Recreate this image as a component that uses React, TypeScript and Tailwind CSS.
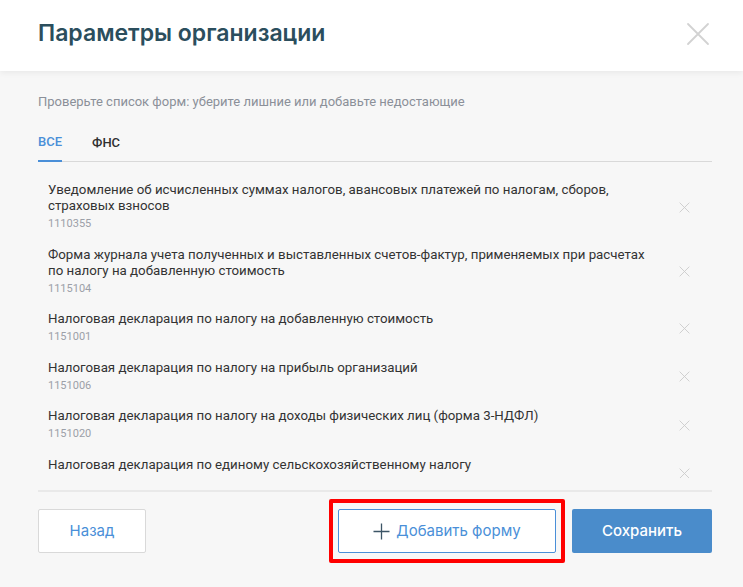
import React from "react";

type FormItem = { title: string; code: string };

const forms: FormItem[] = [
  {
    title:
      "Уведомление об исчисленных суммах налогов, авансовых платежей по налогам, сборов, страховых взносов",
    code: "1110355",
  },
  {
    title:
      "Форма журнала учета полученных и выставленных счетов-фактур, применяемых при расчетах по налогу на добавленную стоимость",
    code: "1115104",
  },
  { title: "Налоговая декларация по налогу на добавленную стоимость", code: "1151001" },
  { title: "Налоговая декларация по налогу на прибыль организаций", code: "1151006" },
  {
    title: "Налоговая декларация по налогу на доходы физических лиц (форма 3-НДФЛ)",
    code: "1151020",
  },
  { title: "Налоговая декларация по единому сельскохозяйственному налогу", code: "1151059" },
];

function CloseIcon({ size, stroke, width }: { size: number; stroke: string; width: number }) {
  return (
    <svg width={size} height={size} viewBox="0 0 24 24" fill="none">
      <path d="M2 2L22 22M22 2L2 22" stroke={stroke} strokeWidth={width} strokeLinecap="round" />
    </svg>
  );
}

export default function App() {
  return (
    <div
      className="w-[743px] h-[587px] bg-[#f7f7f7] flex flex-col overflow-hidden"
      style={{ fontFamily: "Roboto, 'Noto Sans', sans-serif" }}
    >
      {/* header */}
      <div className="h-[71px] shrink-0 bg-white shadow-[0_2px_6px_rgba(0,0,0,0.06)] flex items-center justify-between pl-[38px] pr-[33px] pb-[4px] relative z-10">
        <h1
          className="text-[23px] font-semibold text-[#2b4e5d]"
          style={{ fontFamily: "Inter, 'Open Sans', sans-serif" }}
        >
          Параметры организации
        </h1>
        <button type="button" aria-label="Закрыть" className="w-6 h-6 flex items-center justify-center">
          <CloseIcon size={24} stroke="#d2d2d2" width={1.8} />
        </button>
      </div>

      <div className="flex flex-col pl-[38px] pr-[31px] pt-[23px]">
        <p className="text-[13px] leading-4 text-[#8b9099]">
          Проверьте список форм: уберите лишние или добавьте недостающие
        </p>

        {/* tabs */}
        <div className="flex gap-[30px] mt-[24px] border-b border-[#d9d9d9]">
          <button
            type="button"
            className="text-[13px] leading-4 font-medium text-[#4a8fd8] pb-[10px] border-b-2 border-[#4a8fd8] -mb-px"
          >
            ВСЕ
          </button>
          <button type="button" className="text-[13px] leading-4 font-medium text-[#2f2f2f] pb-[10px]">
            ФНС
          </button>
        </div>

        {/* list */}
        <div className="h-[316px] overflow-hidden pt-[20px] flex flex-col gap-[14.5px]">
          {forms.map((f, i) => (
            <div key={f.code} className="flex items-center pl-[10px] pr-[22px]">
              <div className="flex-1 pr-[22px]">
                <div className="text-[13.3px] leading-4 text-[#333333]">{f.title}</div>
                {i < forms.length - 1 && (
                  <div className="mt-[2px] text-[11px] leading-4 text-[#9ca0a8]">{f.code}</div>
                )}
                {i === forms.length - 1 && <div className="mt-[2px] h-4" />}
              </div>
              <CloseIcon size={11} stroke="#cccccc" width={2} />
            </div>
          ))}
        </div>

        <div className="mt-[12px] h-[2px] bg-[#e9e9e9]" />

        {/* footer */}
        <div
          className="flex items-center pt-[17px]"
          style={{ fontFamily: "Inter, 'Open Sans', sans-serif" }}
        >
          <button
            type="button"
            className="w-[108px] h-[44px] bg-white border border-[#d9d9d9] rounded-[2px] text-[15px] text-[#4a8fd8]"
          >
            Назад
          </button>
          <div className="flex-1" />
          <div className="relative">
            <button
              type="button"
              className="w-[218px] h-[44px] bg-white border border-[#4a8fd8] rounded-[2px] text-[15px] text-[#4a8fd8] flex items-center justify-center gap-[6px]"
            >
              <svg width="17" height="17" viewBox="0 0 17 17" fill="none">
                <path d="M8.5 0.5V16.5M0.5 8.5H16.5" stroke="#3c5566" strokeWidth="1.3" />
              </svg>
              Добавить форму
            </button>
            <div className="absolute -left-[9px] -right-[9px] -top-[10px] -bottom-[10px] border-4 border-[#ff0000] rounded-[2px] pointer-events-none" />
          </div>
          <button
            type="button"
            className="ml-[16px] w-[140px] h-[44px] bg-[#4a8ccb] rounded-[2px] text-[15px] font-medium text-white"
          >
            Сохранить
          </button>
        </div>
      </div>
    </div>
  );
}
